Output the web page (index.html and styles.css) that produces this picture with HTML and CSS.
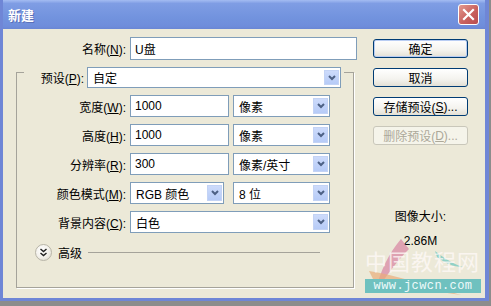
FILE: index.html
```html
<!DOCTYPE html>
<html lang="zh-CN">
<head>
  <meta charset="UTF-8">
  <meta name="viewport" content="width=device-width, initial-scale=1.0">
  <title>新建</title>
  <link rel="stylesheet" href="styles.css">
</head>
<body>
  <div class="window">
    <div class="titlebar">
      <span class="title">新建</span>
      <div class="close">
        <svg width="13" height="13" viewBox="0 0 13 13"><path d="M2 2 L11 11 M11 2 L2 11" stroke="#fff" stroke-width="2.2" stroke-linecap="square"/></svg>
      </div>
    </div>

    <div class="content">
      <div class="main">
        <div class="row name-row">
          <span class="label">名称(<u>N</u>):</span>
          <div class="field name-field">U盘</div>
        </div>

        <div class="group">
          <div class="preset">
            <span class="label preset-label">预设(<u>P</u>):</span>
            <div class="select preset-select">
              <span class="value">自定</span>
              <span class="arrow"><svg width="8" height="6" viewBox="0 0 8 6"><polyline points="1,1 4,4 7,1" fill="none" stroke="#4d6185" stroke-width="2"/></svg></span>
            </div>
          </div>

          <div class="row">
            <span class="label">宽度(<u>W</u>):</span>
            <div class="field num">1000</div>
            <div class="select unit">
              <span class="value">像素</span>
              <span class="arrow"><svg width="8" height="6" viewBox="0 0 8 6"><polyline points="1,1 4,4 7,1" fill="none" stroke="#4d6185" stroke-width="2"/></svg></span>
            </div>
          </div>

          <div class="row">
            <span class="label">高度(<u>H</u>):</span>
            <div class="field num">1000</div>
            <div class="select unit">
              <span class="value">像素</span>
              <span class="arrow"><svg width="8" height="6" viewBox="0 0 8 6"><polyline points="1,1 4,4 7,1" fill="none" stroke="#4d6185" stroke-width="2"/></svg></span>
            </div>
          </div>

          <div class="row">
            <span class="label">分辨率(<u>R</u>):</span>
            <div class="field num">300</div>
            <div class="select unit">
              <span class="value">像素/英寸</span>
              <span class="arrow"><svg width="8" height="6" viewBox="0 0 8 6"><polyline points="1,1 4,4 7,1" fill="none" stroke="#4d6185" stroke-width="2"/></svg></span>
            </div>
          </div>

          <div class="row row-gap">
            <span class="label">颜色模式(<u>M</u>):</span>
            <div class="select mode">
              <span class="value">RGB 颜色</span>
              <span class="arrow"><svg width="8" height="6" viewBox="0 0 8 6"><polyline points="1,1 4,4 7,1" fill="none" stroke="#4d6185" stroke-width="2"/></svg></span>
            </div>
            <div class="select unit bits">
              <span class="value">8 位</span>
              <span class="arrow"><svg width="8" height="6" viewBox="0 0 8 6"><polyline points="1,1 4,4 7,1" fill="none" stroke="#4d6185" stroke-width="2"/></svg></span>
            </div>
          </div>

          <div class="row">
            <span class="label">背景内容(<u>C</u>):</span>
            <div class="select bg">
              <span class="value">白色</span>
              <span class="arrow"><svg width="8" height="6" viewBox="0 0 8 6"><polyline points="1,1 4,4 7,1" fill="none" stroke="#4d6185" stroke-width="2"/></svg></span>
            </div>
          </div>

          <div class="advanced">
            <span class="toggle">
              <svg width="9" height="9" viewBox="0 0 9 9"><polyline points="1.5,1 4.5,3.5 7.5,1" fill="none" stroke="#222" stroke-width="1.5"/><polyline points="1.5,5 4.5,7.5 7.5,5" fill="none" stroke="#222" stroke-width="1.5"/></svg>
            </span>
            <span class="adv-text">高级</span>
            <span class="adv-line"></span>
          </div>
        </div>
      </div>

      <div class="side">
        <div class="btn default">确定</div>
        <div class="btn">取消</div>
        <div class="btn">存储预设(<u>S</u>)...</div>
        <div class="btn disabled">删除预设(<u>D</u>)...</div>
        <div class="info">图像大小:</div>
        <div class="info size">2.86M</div>
      </div>
    </div>

    <div class="watermark">
      <svg class="swoosh" width="116" height="60" viewBox="0 0 116 60">
        <path d="M36 2 C24 16 15 34 10 56 C22 38 32 24 44 12 Z" fill="#d98aa6" opacity="0.75"/>
        <path d="M4 34 C30 38 60 48 96 58 C70 54 36 50 8 42 Z" fill="#e9ad7a" opacity="0.7"/>
        <path d="M70 14 C78 20 86 26 98 30 C88 30 80 26 72 20 Z" fill="#7ccac2" opacity="0.8"/>
      </svg>
      <div class="wm-title">中国教程网</div>
      <div class="wm-url">www.jcwcn.com</div>
    </div>
  </div>
</body>
</html>
```

FILE: styles.css
```css
body {
  margin: 0;
  background: #8c8c8c;
  font-family: "Liberation Sans", "Noto Sans CJK SC", sans-serif;
  font-size: 12px;
  color: #000;
}
u {
  text-decoration: underline;
  text-underline-offset: 1px;
}
.window {
  position: relative;
  width: 482px;
  height: 298px;
  background: #ece9d8;
  border: solid #6f86d6;
  border-width: 0 4px 3px 3px;
  overflow: hidden;
}
.titlebar {
  height: 29px;
  margin: 0 -4px 0 -3px;
  padding: 0 10px 0 8px;
  display: flex;
  align-items: center;
  justify-content: space-between;
  background: linear-gradient(#a4bcf2, #7f9de4 12%, #7293de 60%, #6f8ddb 90%, #6a86d4);
}
.title {
  color: #fff;
  font-weight: bold;
  font-size: 13px;
  text-shadow: 1px 1px 0 #5a6fb8;
}
.close {
  width: 19px;
  height: 19px;
  display: flex;
  align-items: center;
  justify-content: center;
  border: 1px solid #fff;
  border-radius: 3px;
  background: linear-gradient(135deg, #e39a90, #c9615e 55%, #b84c4f);
}
.content {
  display: flex;
}
.main {
  width: 354px;
  padding-top: 8px;
}
.row {
  display: flex;
  align-items: center;
  gap: 4px;
  height: 22px;
  margin-bottom: 7px;
}
.label {
  width: 109px;
  flex: none;
  text-align: right;
  white-space: nowrap;
}
.name-row {
  height: 23px;
  margin-bottom: 0;
}
.name-row .label {
  width: 123px;
}
.field,
.select {
  box-sizing: border-box;
  height: 22px;
  background: #fff;
  border: 1px solid #7f9db9;
  display: flex;
  align-items: center;
}
.field {
  padding-left: 4px;
}
.name-field {
  width: 227px;
  height: 23px;
}
.num {
  width: 99px;
}
.select .value {
  flex: 1;
  padding-left: 5px;
  white-space: nowrap;
}
.arrow {
  width: 15px;
  height: 16px;
  margin-right: 1px;
  display: flex;
  align-items: center;
  justify-content: center;
  background: linear-gradient(#cddbfb, #b6cbf7);
  border: 1px solid #c3d3f5;
  box-sizing: border-box;
}
.unit {
  width: 97px;
}
.mode {
  width: 94px;
}
.bits {
  margin-left: 5px;
}
.bg {
  width: 200px;
}
.row-gap {
  margin-top: 3px;
}
.group {
  box-sizing: border-box;
  width: 338px;
  height: 216px;
  margin: 12px 0 0 13px;
  border: 1px solid #a5a39a;
  box-shadow: 1px 1px 0 #fff;
}
.preset {
  display: flex;
  align-items: center;
  gap: 3px;
  width: fit-content;
  margin: -6px 0 7px 7px;
  padding: 0 3px;
  background: #ece9d8;
}
.preset-label {
  width: 57px;
}
.preset-select {
  width: 254px;
  height: 21px;
}
.preset-select .arrow {
  height: 15px;
}
.advanced {
  display: flex;
  align-items: center;
  margin: 11px 0 0 18px;
}
.toggle {
  box-sizing: border-box;
  width: 17px;
  height: 17px;
  border-radius: 50%;
  border: 1px solid #b8b5a8;
  background: radial-gradient(circle at 40% 35%, #fff, #f2f0ea 55%, #d7d3c4);
  display: flex;
  align-items: center;
  justify-content: center;
}
.adv-text {
  margin: 0 6px;
}
.adv-line {
  width: 232px;
  border-top: 1px solid #a5a39a;
}
.side {
  width: 95px;
  margin-left: 16px;
  padding-top: 10px;
}
.btn {
  box-sizing: border-box;
  height: 19px;
  margin-bottom: 10px;
  border: 1px solid #003c74;
  border-radius: 3px;
  background: linear-gradient(#fff, #f4f3ee 60%, #e3e0d5);
  display: flex;
  align-items: center;
  justify-content: center;
  white-space: nowrap;
}
.btn.default {
  box-shadow: inset 0 0 0 1px #b9cdf3;
}
.btn.disabled {
  color: #aca899;
  border-color: #c9c7ba;
  background: #f5f4ea;
}
.info {
  text-align: center;
  line-height: 14px;
  margin-top: 65px;
}
.info.size {
  margin-top: 10px;
}
.watermark {
  position: absolute;
  left: 362px;
  top: 249px;
  width: 116px;
}
.swoosh {
  position: absolute;
  left: 0;
  top: -12px;
}
.wm-title {
  position: relative;
  font-size: 22px;
  letter-spacing: 1px;
  line-height: 27px;
  color: rgba(255, 250, 248, 0.75);
  white-space: nowrap;
}
.wm-url {
  position: relative;
  margin-top: 3px;
  height: 14px;
  line-height: 14px;
  background: #6fc1bf;
  color: #eefafa;
  font-family: "Liberation Mono", monospace;
  font-size: 12px;
  letter-spacing: 0.4px;
  text-align: center;
}
```
